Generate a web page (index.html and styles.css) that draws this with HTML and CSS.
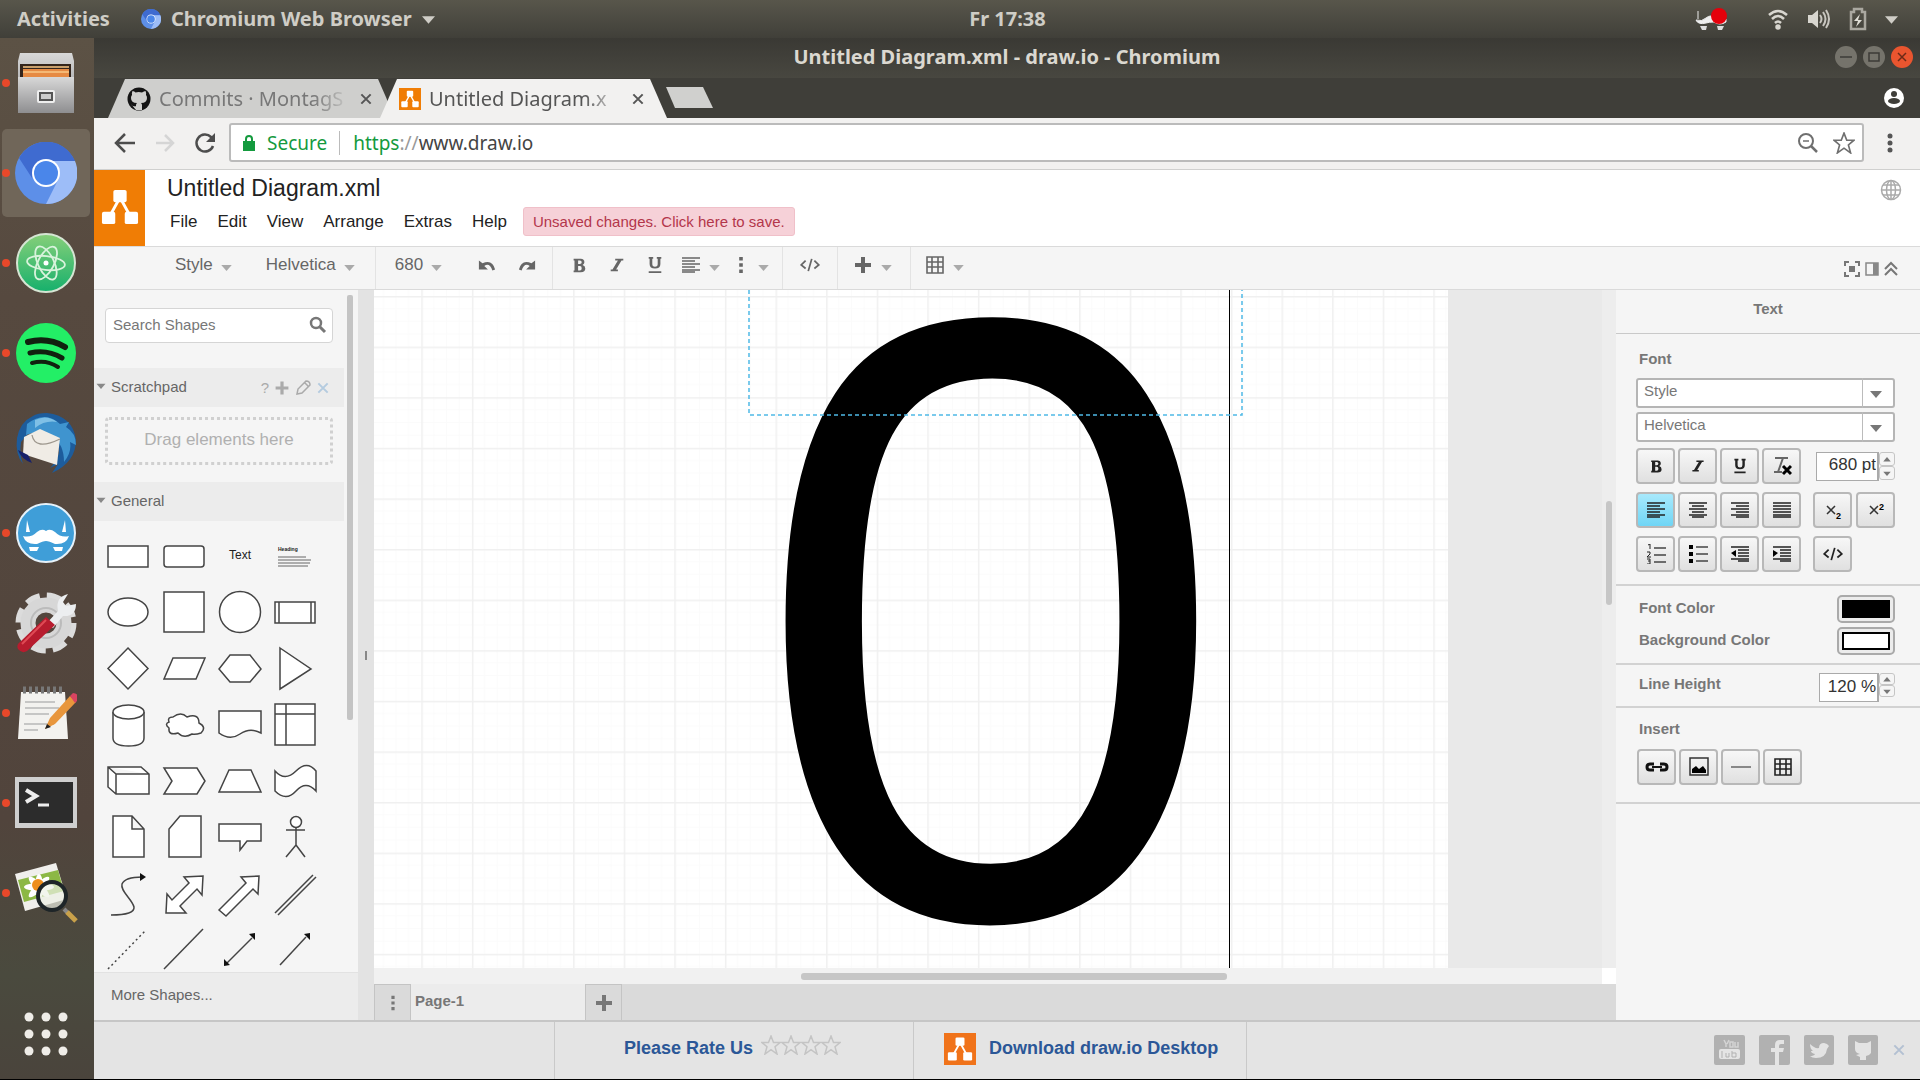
FILE: index.html
```html
<!DOCTYPE html>
<html lang="en">
<head>
<meta charset="utf-8">
<title>Untitled Diagram.xml - draw.io - Chromium</title>
<link rel="stylesheet" href="styles.css">
</head>
<body>
<svg class="defs" aria-hidden="true">
  <symbol id="caret" viewBox="0 0 12 8"><path d="M0 1h12L6 8z" fill="currentColor"/></symbol>
  <symbol id="drawio" viewBox="0 0 40 40"><path d="M20 10 9 30M20 10l11 20" stroke="#fff" stroke-width="3" fill="none"/><rect x="13" y="2" width="14" height="13" rx="2" fill="#fff"/><rect x="1" y="25" width="14" height="13" rx="2" fill="#fff"/><rect x="25" y="25" width="14" height="13" rx="2" fill="#fff"/></symbol>
  <symbol id="chromium" viewBox="0 0 62 62"><circle cx="31" cy="31" r="31" fill="#5d8fe8"/><path d="M4 16A31 31 0 0 1 60 19H31L17 36z" fill="#3f6bd0"/><path d="M60 19A31 31 0 0 1 31 62L43 38 38 19z" fill="#9dbdf8"/><circle cx="31" cy="31" r="14" fill="#fff"/><circle cx="31" cy="31" r="12" fill="#4a86ea"/></symbol>
  <symbol id="lines-left" viewBox="0 0 20 16"><path d="M1 1h18M1 4h13M1 7h18M1 10h13M1 13h18M1 15h13" stroke="currentColor" stroke-width="1.6"/></symbol>
  <symbol id="bold" viewBox="0 0 20 20"><path d="M4 3h8q4 0 4 4 0 2-2 3 3 1 3 4 0 4-5 4H4v-2h1V5H4zM9 5v4h2q2 0 2-2t-2-2zM9 11v5h2q2 0 2-2.500t-2-2.500z" fill="currentColor" fill-rule="evenodd"/></symbol>
  <symbol id="italic" viewBox="0 0 20 20"><path d="M8 3h9v2h-2L9 15h2v2H3v-2h2L11 5H8z" fill="currentColor"/></symbol>
  <symbol id="underline" viewBox="0 0 20 20"><path d="M3 1h5v2H7v6q0 3 3 3t3-3V3h-1V1h5v2h-1v6q0 5-6 5T4 9V3H3zM3 17h14v2H3z" fill="currentColor"/></symbol>
  <symbol id="code" viewBox="0 0 24 16"><path d="M7 3 2 8l5 4M17 3l5 5-5 4M14 1l-4 14" fill="none" stroke="currentColor" stroke-width="2"/></symbol>
  <symbol id="plus" viewBox="0 0 20 20"><path d="M8 2h4v6h6v4h-6v6H8v-6H2V8h6z" fill="currentColor"/></symbol>
  <symbol id="table" viewBox="0 0 20 20"><path d="M2 2h16v16H2zM2 7h16M2 12h16M7 2v16M13 2v16" fill="none" stroke="currentColor" stroke-width="1.600"/></symbol>
  <symbol id="dots" viewBox="0 0 20 20"><path d="M8 1h4v4H8zM8 8h4v4H8zM8 15h4v4H8z" fill="currentColor"/></symbol>
  <symbol id="star" viewBox="0 0 20 20"><path d="M10 1l2.500 6.500H19l-5 4.300 2 7.200-6-4.300L4 19l2-7.200-5-4.300h6.500z" fill="none" stroke="currentColor" stroke-width="1.500"/></symbol>
  <symbol id="cross" viewBox="0 0 12 12"><path d="M2 2l8 8M10 2l-8 8" stroke="currentColor" stroke-width="1.700"/></symbol>
  <symbol id="undo" viewBox="0 0 20 20"><path d="M1 5v10h10L7 11q6-4 9 5l3-1Q16 3 5 8z" fill="currentColor"/></symbol>
</svg>

<header class="topbar">
  <div class="top-left">
    <button class="sys">Activities</button>
    <button class="sys app"><svg width="20" height="22"><use href="#chromium"/></svg>Chromium Web Browser<svg width="13" height="9"><use href="#caret"/></svg></button>
  </div>
  <time class="clock">Fr 17:38</time>
  <div class="top-right">
    <svg class="tray-app" width="34" height="26" viewBox="0 0 34 26"><path d="M3 5v8M1 14q6 2 10-2 5-4 8 0 5 4 12 1v3q-6 4-12 0-5 0-8 1-8 2-10-3z" fill="#eee" stroke="#eee"/><path d="M5 20h7l-1 4H7zM22 20h7l-2 4h-4z" fill="#ddd"/><circle cx="24" cy="10" r="8" fill="#e5000b"/></svg>
    <svg width="22" height="22" viewBox="0 0 22 22" fill="none" stroke="#d8d6cf" stroke-width="2.500"><path d="M2 7q9-8 18 0M5 11q6-6 12 0M8 15q3-3 6 0"/><circle cx="11" cy="19" r="1.500" fill="#d8d6cf"/></svg>
    <svg width="24" height="22" viewBox="0 0 24 22"><path d="M1 7h4l6-5v18l-6-5H1z" fill="#d8d6cf"/><path d="M13 7q3 4 0 8M16 4q5 7 0 14M19 2q6 9 0 18" fill="none" stroke="#c8c6bf" stroke-width="2"/></svg>
    <svg width="18" height="24" viewBox="0 0 18 24"><path d="M2 5h3V2h8v3h3v17H2z" fill="none" stroke="#aaa8a0" stroke-width="2.500"/><path d="M11 7l-6 7h4l-2 6 6-7H9z" fill="#e0ded6"/></svg>
    <svg width="13" height="9"><use href="#caret"/></svg>
  </div>
</header>

<div class="desktop">
<nav class="dock" aria-label="Dock">
  <button class="dock-item run" aria-label="Files"><svg width="62" height="62" viewBox="0 0 62 62"><defs><linearGradient id="g1" x2="0" y2="1"><stop stop-color="#d8d8d8"/><stop offset="1" stop-color="#8e8e90"/></linearGradient></defs><path d="M5 1h52l2 8v52H3V9z" fill="url(#g1)"/><path d="M5 12h51v15H5z" fill="#33251c"/><path d="M8 17h46v9H8z" fill="#e68a43"/><path d="M8 15h46M8 20h46" stroke="#f9c887" stroke-width="1.500" fill="none"/><path d="M3 25h56v36H3z" fill="url(#g1)"/><rect x="22" y="38" width="18" height="13" rx="2" fill="#eee"/><rect x="25" y="41" width="12" height="7" fill="#ccc" stroke="#555" stroke-width="2"/></svg></button>
  <button class="dock-item run active" aria-label="Chromium"><svg width="62" height="62"><use href="#chromium"/></svg></button>
  <button class="dock-item run" aria-label="Atom"><svg width="62" height="62" viewBox="0 0 62 62"><defs><linearGradient id="g2" x2="0" y2="1"><stop stop-color="#86cf79"/><stop offset="1" stop-color="#16b06c"/></linearGradient></defs><circle cx="31" cy="31" r="29" fill="url(#g2)" stroke="#d5e5d3" stroke-width="2"/><g fill="none" stroke="#d8f3dc" stroke-width="1.800"><ellipse cx="31" cy="31" rx="19" ry="7" transform="rotate(6 31 31)"/><ellipse cx="31" cy="31" rx="18" ry="8" transform="rotate(64 31 31)"/><ellipse cx="31" cy="31" rx="18" ry="8" transform="rotate(118 31 31)"/></g><circle cx="31" cy="31" r="2.500" fill="#fff"/></svg></button>
  <button class="dock-item run" aria-label="Spotify"><svg width="62" height="62" viewBox="0 0 62 62"><circle cx="31" cy="31" r="30" fill="#23ef66"/><g fill="none" stroke="#11210f" stroke-linecap="round"><path d="M13 20q20-5 37 5" stroke-width="6"/><path d="M15 31q17-4 32 5" stroke-width="5"/><path d="M17 41q14-4 26 4" stroke-width="4"/></g></svg></button>
  <button class="dock-item" aria-label="Thunderbird"><svg width="62" height="62" viewBox="0 0 62 62"><path d="M2 26Q5 10 18 4q4-3 14-3 26 3 29 27 0 22-24 33l6-9-8 4q12-12 8-24L16 18 6 30q-2 12 2 22-8-10-6-26z" fill="#1d5c9c"/><path d="M12 12Q30-2 45 12l9-2-3 5q10 6 10 18l-6-3q2 10-6 20 0-18-12-26-12-7-26-1z" fill="#3f94cf"/><path d="M20 8q12-6 22 2-12-2-22 6z" fill="#7fc0e6"/><path d="M9 25l16-8 20 9-3 27L8 42z" fill="#f0ece5"/><path d="M17 23q3 16 28 4" fill="none" stroke="#9d978d" stroke-width="1.300"/><path d="M3 38q3 9 14 13l-4-8z" fill="#16206b"/></svg></button>
  <button class="dock-item run" aria-label="Mail helper"><svg width="62" height="62" viewBox="0 0 62 62"><circle cx="31" cy="31" r="29" fill="#3f9ed8" stroke="#e6f2fa" stroke-width="2"/><path d="M12 18l3 12h-4zM50 18l-3 12h4zM8 34q8 2 14-4 5-4 9-1 4-3 9 1 6 6 14 4-3 9-14 8-6-3-9-3t-9 3q-11 1-14-8z" fill="#fff"/><path d="M14 45h10l-2 4h-7zM38 45h10l-1 4h-7z" fill="#fff"/></svg></button>
  <button class="dock-item" aria-label="Settings"><svg width="62" height="62" viewBox="0 0 62 62"><circle cx="31" cy="31" r="26" fill="none" stroke="#dcdcdc" stroke-width="9" stroke-dasharray="13.600 6.820"/><circle cx="31" cy="31" r="18" fill="none" stroke="#d7d7d7" stroke-width="15"/><circle cx="31" cy="31" r="15" fill="none" stroke="#bbb" stroke-width="2"/><path d="M31 32 43 19q-3-14 10-17l-5 8 3 4 10-2q0 13-13 12L38 36z" fill="#eceef0"/><path d="M31 25l9 8L12 59q-5 3-9-2-2-4 2-7z" fill="#b71c2e"/><path d="M31 28 7 52" stroke="#e04a55" stroke-width="2"/></svg></button>
  <button class="dock-item run" aria-label="Text editor"><svg width="62" height="62" viewBox="0 0 62 62"><path d="M6 10h44l3 47H3z" fill="#f3f2ef"/><path d="M8 8h42" stroke="#777" stroke-width="7" stroke-dasharray="3 3"/><path d="M10 20h30M10 26h34M10 32h24M9 42h30M9 48h14" stroke="#b8b8b8" stroke-width="1.500"/><path d="M30 47l5-11 20-22 6 6-21 22z" fill="#e8963c"/><path d="M55 14l3-3q7 1 5 7l-3 3z" fill="#d84461"/><path d="M30 47l2-5 4 3z" fill="#222"/></svg></button>
  <button class="dock-item run" aria-label="Terminal"><svg width="64" height="54" viewBox="0 0 64 54"><rect x="1" y="1" width="62" height="51" fill="#cfcfcf"/><rect x="5" y="6" width="54" height="41" fill="#2c2c2c"/><path d="M12 14l10 6-10 6" fill="none" stroke="#eee" stroke-width="4"/><path d="M24 29h11" stroke="#eee" stroke-width="3"/></svg></button>
  <button class="dock-item run" aria-label="Image viewer"><svg width="64" height="62" viewBox="0 0 64 62"><path d="M1 12 42 1l11 36-42 12z" fill="#f0efec"/><path d="M4 18 44 8l6 21-40 11z" fill="#8cb845"/><g fill="#fff"><ellipse cx="25" cy="25" rx="15" ry="4"/><ellipse cx="25" cy="25" rx="4" ry="13"/><ellipse cx="25" cy="25" rx="14" ry="4" transform="rotate(45 25 25)"/><ellipse cx="25" cy="25" rx="14" ry="4" transform="rotate(-45 25 25)"/></g><circle cx="24" cy="23" r="6" fill="#ee8e1d"/><circle cx="38" cy="34" r="14" fill="#edf1e5" fill-opacity=".7" stroke="#1e2528" stroke-width="4"/><path d="M50 47l4 4" stroke="#888" stroke-width="4"/><path d="M53 50l9 9" stroke="#c9a14a" stroke-width="5"/></svg></button>
  <button class="dock-item apps" aria-label="Show applications"><svg width="46" height="46" viewBox="0 0 46 46" fill="#efede8"><circle cx="6" cy="6" r="4.500"/><circle cx="23" cy="6" r="4.500"/><circle cx="40" cy="6" r="4.500"/><circle cx="6" cy="23" r="4.500"/><circle cx="23" cy="23" r="4.500"/><circle cx="40" cy="23" r="4.500"/><circle cx="6" cy="40" r="4.500"/><circle cx="23" cy="40" r="4.500"/><circle cx="40" cy="40" r="4.500"/></svg></button>
</nav>

<main class="window">
  <div class="titlebar">
    <h1>Untitled Diagram.xml - draw.io - Chromium</h1>
    <div class="win-buttons">
      <button aria-label="Minimize"><svg width="24" height="24" viewBox="0 0 24 24"><circle cx="12" cy="12" r="11" fill="#75736b"/><path d="M6 12h12" stroke="#3c3b37" stroke-width="1.500"/></svg></button>
      <button aria-label="Maximize"><svg width="24" height="24" viewBox="0 0 24 24"><circle cx="12" cy="12" r="11" fill="#75736b"/><rect x="7" y="8" width="10" height="8" fill="none" stroke="#3c3b37" stroke-width="1.500"/></svg></button>
      <button aria-label="Close"><svg width="24" height="24" viewBox="0 0 24 24"><circle cx="12" cy="12" r="11" fill="#e9552f"/><path d="M8 8l8 8M16 8l-8 8" stroke="#6b2a17" stroke-width="1.500"/></svg></button>
    </div>
  </div>
  <div class="tabstrip">
    <div class="tab"><svg width="24" height="24" viewBox="0 0 24 24"><circle cx="12" cy="12" r="11.500" fill="#151515"/><path d="M9 23v-4q-4 1-5-2M9 23v-5q0-1 1-2-6 0-6-5 0-2 1-3-.5-2 .5-4 2 0 3 1.500 3-1 6.500 0Q17 4 18.500 4q1 2 .5 4 1 1 1 3 0 5-6 5 1 1 1 2v5z" fill="#cfcfcd"/></svg><span>Commits · MontagS</span><button aria-label="Close tab"><svg width="14" height="14"><use href="#cross"/></svg></button></div>
    <div class="tab current"><svg class="fav" width="22" height="22" viewBox="-4 -4 48 48"><use href="#drawio" width="40" height="40"/></svg><span>Untitled Diagram.x</span><button aria-label="Close tab"><svg width="14" height="14"><use href="#cross"/></svg></button></div>
    <button class="newtab" aria-label="New tab"></button>
    <button class="profile" aria-label="Profile"><svg width="20" height="20" viewBox="0 0 20 20"><circle cx="10" cy="10" r="10" fill="#fff"/><circle cx="10" cy="6" r="3" fill="#3f3e39"/><ellipse cx="10" cy="13" rx="6" ry="3" fill="#3f3e39"/></svg></button>
  </div>
  <div class="navbar">
    <button aria-label="Back"><svg width="24" height="24" viewBox="0 0 24 24"><path d="M22 12H4M12 3l-9 9 9 9" fill="none" stroke="#4d4d4d" stroke-width="2.500"/></svg></button>
    <button aria-label="Forward"><svg width="24" height="24" viewBox="0 0 24 24"><path d="M3 12h17M12 4l8 8-8 8" fill="none" stroke="#d5d5d5" stroke-width="2.500"/></svg></button>
    <button aria-label="Reload"><svg width="24" height="24" viewBox="0 0 24 24"><path d="M20 15a8.500 8.500 0 1 1-2-9l3 3" fill="none" stroke="#4d4d4d" stroke-width="2.500"/><path d="M22 2v9h-9z" fill="#4d4d4d"/></svg></button>
    <div class="omnibox">
      <svg width="14" height="18" viewBox="0 0 14 18"><path d="M1 7h12v10H1z" fill="#149a3e"/><path d="M4 8V5q0-3 3-3t3 3v3" fill="none" stroke="#149a3e" stroke-width="2"/></svg>
      <span class="secure">Secure</span>
      <div class="url" role="textbox" aria-label="Address"><span class="scheme">https</span><span class="slashes">://</span>www.draw.io</div>
      <button aria-label="Zoom"><svg width="22" height="22" viewBox="0 0 22 22" fill="none" stroke="#6f6f6f"><circle cx="9" cy="9" r="7" stroke-width="2"/><path d="M14 14l6 6" stroke-width="2.500"/><path d="M6 9h6" stroke-width="1.500"/></svg></button>
      <button aria-label="Bookmark"><svg class="ink" width="22" height="22"><use href="#star"/></svg></button>
    </div>
    <button class="more" aria-label="Browser menu"><svg width="8" height="22" viewBox="0 0 8 22" fill="#555"><circle cx="4" cy="4" r="2.500"/><circle cx="4" cy="11" r="2.500"/><circle cx="4" cy="18" r="2.500"/></svg></button>
  </div>

  <div class="app-head">
    <div class="logo"><svg width="38" height="38"><use href="#drawio"/></svg></div>
    <div class="head-text">
      <div class="doc-title">Untitled Diagram.xml</div>
      <div class="menu"><button>File</button><button>Edit</button><button>View</button><button>Arrange</button><button>Extras</button><button>Help</button><button class="unsaved">Unsaved changes. Click here to save.</button></div>
    </div>
    <button class="globe" aria-label="Language"><svg width="22" height="22" viewBox="0 0 22 22" fill="none" stroke="#aaa" stroke-width="1.500"><circle cx="11" cy="11" r="9.500"/><ellipse cx="11" cy="11" rx="4.500" ry="9.500"/><path d="M2 11h18M3 6h16M3 16h16M11 1v20"/></svg></button>
  </div>

  <div class="toolbar">
    <div class="group g-font"><button class="drop">Style<svg width="11" height="7"><use href="#caret"/></svg></button><button class="drop">Helvetica<svg width="11" height="7"><use href="#caret"/></svg></button></div>
    <div class="group g-size"><button class="drop">680<svg width="11" height="7"><use href="#caret"/></svg></button><button aria-label="Undo"><svg width="20" height="18"><use href="#undo"/></svg></button><button aria-label="Redo"><svg class="flip" width="20" height="18"><use href="#undo"/></svg></button></div>
    <div class="group g-format"><button aria-label="Bold"><svg width="18" height="18"><use href="#bold"/></svg></button><button aria-label="Italic"><svg width="18" height="18"><use href="#italic"/></svg></button><button aria-label="Underline"><svg width="18" height="18"><use href="#underline"/></svg></button><button class="drop" aria-label="Align"><svg width="20" height="16"><use href="#lines-left"/></svg><svg width="11" height="7"><use href="#caret"/></svg></button><button class="drop" aria-label="More formats"><svg width="18" height="18"><use href="#dots"/></svg><svg width="11" height="7"><use href="#caret"/></svg></button></div>
    <div class="group g-code"><button aria-label="HTML"><svg width="24" height="14"><use href="#code"/></svg></button></div>
    <div class="group g-plus"><button class="drop" aria-label="Insert"><svg width="20" height="20"><use href="#plus"/></svg><svg width="11" height="7"><use href="#caret"/></svg></button></div>
    <div class="group g-table"><button class="drop" aria-label="Table"><svg width="20" height="20"><use href="#table"/></svg><svg width="11" height="7"><use href="#caret"/></svg></button></div>
    <div class="view-tools">
      <button aria-label="Fullscreen"><svg width="16" height="16" viewBox="0 0 16 16" fill="none" stroke="#777" stroke-width="2"><path d="M1 5V1h4M11 1h4v4M15 11v4h-4M5 15H1v-4"/><rect x="6" y="6" width="4" height="4" fill="#777"/></svg></button>
      <button aria-label="Format panel"><svg width="14" height="14" viewBox="0 0 14 14"><path d="M1 1h12v12H1z" fill="none" stroke="#888" stroke-width="1.500"/><path d="M8 1h5v12H8z" fill="#888"/></svg></button>
      <button aria-label="Collapse"><svg width="14" height="16" viewBox="0 0 14 16" fill="none" stroke="#777" stroke-width="2"><path d="M1 8l6-6 6 6M1 14l6-6 6 6"/></svg></button>
    </div>
  </div>

  <div class="work">
    <aside class="shapes">
      <div class="scroller">
        <div class="scroll-content">
          <label class="search"><input type="text" placeholder="Search Shapes" aria-label="Search Shapes"><svg width="18" height="18" viewBox="0 0 18 18" fill="none" stroke="#777"><circle cx="7" cy="7" r="5" stroke-width="2.500"/><path d="M11 11l5 5" stroke-width="3"/></svg></label>
          <div class="section-head"><svg width="10" height="6"><use href="#caret"/></svg><h2>Scratchpad</h2><div class="pad-tools"><button>?</button><button aria-label="Add"><svg width="16" height="16"><use href="#plus"/></svg></button><button aria-label="Edit"><svg width="16" height="16" viewBox="0 0 16 16" fill="none" stroke="#aaa" stroke-width="1.500"><path d="M2 14l1-5 8-8q4 0 4 4l-8 8zM10 3l3 3"/></svg></button><button class="blue" aria-label="Close scratchpad"><svg width="14" height="14"><use href="#cross"/></svg></button></div></div>
          <div class="dropzone">Drag elements here</div>
          <div class="section-head"><svg width="10" height="6"><use href="#caret"/></svg><h2>General</h2></div>
          <div class="palette">
            <svg viewBox="0 0 56 56"><rect x="8" y="18" width="40" height="21"/></svg>
            <svg viewBox="0 0 56 56"><rect x="8" y="18" width="40" height="21" rx="3"/></svg>
            <svg viewBox="0 0 56 56"><text x="28" y="31" text-anchor="middle" class="t12">Text</text></svg>
            <svg viewBox="0 0 56 56"><text x="10" y="23" class="t5">Heading</text><path d="M10 29h28M10 32h33M10 35h32M10 38h30" stroke="#666" stroke-width="1"/></svg>

            <svg viewBox="0 0 56 56"><ellipse cx="28" cy="28" rx="20" ry="14"/></svg>
            <svg viewBox="0 0 56 56"><rect x="8" y="8" width="40" height="40"/></svg>
            <svg viewBox="0 0 56 56"><circle cx="28" cy="28" r="20.500"/></svg>
            <svg viewBox="0 0 56 56"><path d="M7 18h40v21H7zM11 18v21M43 18v21"/></svg>

            <svg viewBox="0 0 56 56"><path d="M28 8l20 20.500L28 49 8 28.500z"/></svg>
            <svg viewBox="0 0 56 56"><path d="M17 18h32l-9 21H8z"/></svg>
            <svg viewBox="0 0 56 56"><path d="M18 15h20l11 14-11 13H18L7 29z"/></svg>
            <svg viewBox="0 0 56 56"><path d="M12 8l31 21-31 20z"/></svg>

            <svg viewBox="0 0 56 56"><path d="M13 16v26q0 8 15.500 8T44 42V16"/><ellipse cx="28.500" cy="16" rx="15.500" ry="7"/></svg>
            <svg viewBox="0 0 56 56"><path d="M17 21q8-6 14 0 12-4 12 6 8 4 2 10-6 2-9 1-8 5-14-1-10 3-9-5-5-4 0-6-2-5 4-5z"/></svg>
            <svg viewBox="0 0 56 56"><path d="M7 15h42v22q-11-6-21 1T7 37z"/></svg>
            <svg viewBox="0 0 56 56"><path d="M7 8h40v41H7zM18 8v41M7 18h40"/></svg>

            <svg viewBox="0 0 56 56"><path d="M8 15h33l8 7v20H16l-8-7zM8 15l8 7h33M16 22v20"/></svg>
            <svg viewBox="0 0 56 56"><path d="M8 16h33l8 13-8 13H8l8-13z"/></svg>
            <svg viewBox="0 0 56 56"><path d="M17 18h22l10 22H7z"/></svg>
            <svg viewBox="0 0 56 56"><path d="M7 19q10 11 21 0t20 0v20q-10-11-20 0t-21 0z"/></svg>

            <svg viewBox="0 0 56 56"><path d="M13 8h19l12 13v28H13zM32 8v13h12"/></svg>
            <svg viewBox="0 0 56 56"><path d="M24 8h21v41H13V21z"/></svg>
            <svg viewBox="0 0 56 56"><path d="M7 16h42v17H35l-7 9v-9H7z"/></svg>
            <svg viewBox="0 0 56 56"><circle cx="28" cy="14" r="5.500"/><path d="M28 20v17M18 22h19M28 37L18 49M28 37l9 12" /></svg>

            <svg viewBox="0 0 56 56"><path d="M11 51q24 0 23-8c-2-8-14-16-12-23q3-7 20-7" fill="none"/><path d="M40 9l6 4-6 4z" class="fill"/></svg>
            <svg viewBox="0 0 56 56"><path d="M10 49l1-19 5 6 17-17-5-6 19-1-1 19-5-6-17 17 6 7z"/></svg>
            <svg viewBox="0 0 56 56"><path d="M7 46l27-27-5-6 18-1-1 18-5-5-27 27z"/></svg>
            <svg viewBox="0 0 56 56"><path d="M7 49l38-38M10 51l38-38"/></svg>

            <svg viewBox="0 0 56 56"><path d="M8 49l38-39" stroke-dasharray="2 3"/></svg>
            <svg viewBox="0 0 56 56"><path d="M8 49l39-40"/></svg>
            <svg viewBox="0 0 56 56"><path d="M15 43l25-25"/><path d="M12 46v-7l6 6zM43 13v7l-6-6z" class="fill"/></svg>
            <svg viewBox="0 0 56 56"><path d="M12 45l26-28"/><path d="M42 13v7l-6-6z" class="fill"/></svg>
          </div>
        </div>
        <div class="track"><div class="thumb"></div></div>
      </div>
      <button class="more-shapes">More Shapes...</button>
    </aside>
    <div class="splitter"></div>
    <section class="center">
      <div class="canvas-row">
        <div class="canvas">
          <div class="sheet">
            <svg width="100%" height="100%"><defs><pattern id="grid" x="47.300" y="6" width="50.600" height="50.600" patternUnits="userSpaceOnUse"><path d="M12.650 0v50.600M25.300 0v50.600M37.950 0v50.600M0 12.650h50.600M0 25.300h50.600M0 37.950h50.600" stroke="#fbfbfb" stroke-width="1" fill="none"/><path d="M0 0h50.600M0 0v50.600" stroke="#f0f0f0" stroke-width="3" fill="none"/></pattern></defs><rect width="100%" height="100%" fill="url(#grid)"/></svg>
          </div>
          <div class="page-edge"></div>
          <div class="glyph">0</div>
          <svg class="outline" width="496" height="127" viewBox="0 0 496 127"><path d="M1 0v125h493V0" fill="none" stroke="#4fb9e6" stroke-width="1.500" stroke-dasharray="4 3"/></svg>
        </div>
        <div class="vtrack"><div class="vthumb"></div></div>
      </div>
      <div class="htrack"><div class="hthumb"></div></div>
      <div class="pages"><button class="page-btn" aria-label="Pages"><svg width="16" height="18"><use href="#dots"/></svg></button><button class="page-name">Page-1</button><button class="page-btn" aria-label="Insert page"><svg width="20" height="20"><use href="#plus"/></svg></button></div>
    </section>

    <aside class="format">
      <h2 class="format-title">Text</h2>
      <div class="block font-block">
        <h3>Font</h3>
        <div class="pick"><select aria-label="Style"><option>Style</option></select><svg width="12" height="10"><use href="#caret"/></svg></div>
        <div class="pick"><select aria-label="Font family"><option>Helvetica</option></select><svg width="12" height="10"><use href="#caret"/></svg></div>
        <div class="btn-row">
          <button class="tb" aria-label="Bold"><svg width="16" height="16"><use href="#bold"/></svg></button><button class="tb" aria-label="Italic"><svg width="16" height="16"><use href="#italic"/></svg></button><button class="tb" aria-label="Underline"><svg width="16" height="16"><use href="#underline"/></svg></button><button class="tb" aria-label="Clear formatting"><svg width="20" height="20" viewBox="0 0 20 20"><path d="M3 2h13M11 2L6 16M2 16h8" stroke="#666" stroke-width="2"/><path d="M11 10l8 8M19 10l-8 8" stroke="#000" stroke-width="3"/></svg></button>
          <span class="spin"><input type="text" value="680 pt" aria-label="Font size"><span class="steps"><button aria-label="Increase size"><svg class="up" width="8" height="5"><use href="#caret"/></svg></button><button aria-label="Decrease size"><svg width="8" height="5"><use href="#caret"/></svg></button></span></span>
        </div>
        <div class="btn-row">
          <button class="tb on" aria-label="Left"><svg width="20" height="16"><use href="#lines-left"/></svg></button><button class="tb" aria-label="Center"><svg width="20" height="16" viewBox="0 0 20 16"><path d="M1 1h18M4 4h12M1 7h18M4 10h12M1 13h18M4 15h12" stroke="#222" stroke-width="1.500"/></svg></button><button class="tb" aria-label="Right"><svg width="20" height="16" viewBox="0 0 20 16"><path d="M1 1h18M6 4h13M1 7h18M6 10h13M1 13h18M6 15h13" stroke="#222" stroke-width="1.500"/></svg></button><button class="tb" aria-label="Justify"><svg width="20" height="16" viewBox="0 0 20 16"><path d="M1 1h18M1 4h18M1 7h18M1 10h18M1 13h18M1 15h18" stroke="#222" stroke-width="1.500"/></svg></button>
          <span class="pair"><button class="tb" aria-label="Subscript"><svg width="20" height="20" viewBox="0 0 20 20"><path d="M4 6l8 8M12 6l-8 8" stroke="#333" stroke-width="1.500"/><text x="13" y="19" class="t9">2</text></svg></button><button class="tb" aria-label="Superscript"><svg width="20" height="20" viewBox="0 0 20 20"><path d="M4 6l8 8M12 6l-8 8" stroke="#333" stroke-width="1.500"/><text x="13" y="10" class="t9">2</text></svg></button></span>
        </div>
        <div class="btn-row">
          <button class="tb" aria-label="Numbered list"><svg width="20" height="20" viewBox="0 0 20 20"><path d="M8 4h12M8 11h12M8 18h12" stroke="#444" stroke-width="1.500"/><path d="M2 1l2-1v5M1 8h3v2L1 13h4M1 15h3v5H1M2 17h2" stroke="#222" fill="none"/></svg></button><button class="tb" aria-label="Bulleted list"><svg width="20" height="20" viewBox="0 0 20 20"><path d="M8 3h12M8 10h12M8 17h12" stroke="#444" stroke-width="1.500"/><path d="M1 1h4v4H1zM1 8h4v4H1zM1 15h4v4H1z"/></svg></button><button class="tb" aria-label="Outdent"><svg width="20" height="16" viewBox="0 0 20 16"><path d="M1 1h18M8 4h11M8 7h11M8 10h11M1 13h18M8 15h11" stroke="#222" stroke-width="1.500"/><path d="M6 4v7L1 7z"/></svg></button><button class="tb" aria-label="Indent"><svg width="20" height="16" viewBox="0 0 20 16"><path d="M1 1h18M8 4h11M8 7h11M8 10h11M1 13h18M8 15h11" stroke="#222" stroke-width="1.500"/><path d="M1 4v7l5-4z"/></svg></button>
          <span class="pair"><button class="tb" aria-label="HTML"><svg width="24" height="14"><use href="#code"/></svg></button></span>
        </div>
      </div>
      <div class="block colors">
        <div class="line"><h3>Font Color</h3><button class="swatch black" aria-label="Font Color"><i></i></button></div>
        <div class="line"><h3>Background Color</h3><button class="swatch" aria-label="Background Color"><i></i></button></div>
      </div>
      <div class="block height-block">
        <div class="line"><label for="lh">Line Height</label><span class="spin short"><input id="lh" type="text" value="120 %"><span class="steps"><button aria-label="Increase line height"><svg class="up" width="8" height="5"><use href="#caret"/></svg></button><button aria-label="Decrease line height"><svg width="8" height="5"><use href="#caret"/></svg></button></span></span></div>
      </div>
      <div class="block insert-block">
        <h3>Insert</h3>
        <div class="btn-row">
          <button class="tb" aria-label="Link"><svg width="24" height="14" viewBox="0 0 24 14" fill="none" stroke="#111" stroke-width="3"><path d="M9 4H5q-3 0-3 3t3 3h4M15 4h4q3 0 3 3t-3 3h-4"/><path d="M7 7h10" stroke-width="2"/></svg></button><button class="tb" aria-label="Image"><svg width="20" height="20" viewBox="0 0 20 20"><path d="M1 1h18v17H1z" fill="none" stroke="#333" stroke-width="1.500"/><path d="M3 16v-4l4-3 3 3 4-3 3 4v3z"/></svg></button><button class="tb" aria-label="Rule"><svg width="20" height="4"><path d="M0 2h20" stroke="#888" stroke-width="2"/></svg></button><button class="tb" aria-label="Table"><svg width="20" height="20"><use href="#table"/></svg></button>
        </div>
      </div>
    </aside>
  </div>

  <footer class="footer">
    <div class="foot-cell blank"></div>
    <div class="foot-cell rate"><a href="#rate">Please Rate Us</a><span class="stars"><svg width="20" height="20"><use href="#star"/></svg><svg width="20" height="20"><use href="#star"/></svg><svg width="20" height="20"><use href="#star"/></svg><svg width="20" height="20"><use href="#star"/></svg></span></div>
    <div class="foot-cell desktop-app"><svg class="badge" width="32" height="32" viewBox="-5 -5 50 50"><use href="#drawio" width="40" height="40"/></svg><a href="#desktop">Download draw.io Desktop</a></div>
    <div class="social">
      <a href="#youtube" aria-label="YouTube"><svg width="31" height="30" viewBox="0 0 31 30"><rect width="31" height="30" rx="2" fill="#b1b1b1"/><path d="M10 5l2 4v3M15 5l-2 4M16 7h3v5h-3zM21 7v5h3V7" stroke="#d4d4d4" stroke-width="1.500" fill="none"/><rect x="5" y="14" width="21" height="10" rx="2" fill="#e4e4e4"/><path d="M8 16v7M12 18v4h3v-4M18 16v6h4v-4h-4" stroke="#b1b1b1" fill="none"/></svg></a>
      <a href="#facebook" aria-label="Facebook"><svg width="31" height="30" viewBox="0 0 31 30"><rect width="31" height="30" rx="2" fill="#b1b1b1"/><path d="M16 30V17h-4v-4h4v-3q0-5 5-5h4v4h-3q-2 0-2 2v2h5l-1 4h-4v13z" fill="#e4e4e4"/></svg></a>
      <a href="#twitter" aria-label="Twitter"><svg width="30" height="30" viewBox="0 0 30 30"><rect width="30" height="30" rx="2" fill="#b1b1b1"/><path d="M6 9q5 5 9 4 0-5 5-5l3 1 2 2-2 3q-1 9-11 9-4 0-6-2 4 0 5-2-4-1-4-3h2q-3-2-3-7z" fill="#e4e4e4"/></svg></a>
      <a href="#github" aria-label="GitHub"><svg width="30" height="30" viewBox="0 0 30 30"><rect width="30" height="30" rx="2" fill="#b1b1b1"/><path d="M7 6l4 2h8l4-2v12q-2 3-5 3v4h-6v-3l-4-2 4-1q-5-1-5-5z" fill="#e4e4e4"/></svg></a>
      <button class="foot-close" aria-label="Close"><svg width="14" height="14"><use href="#cross"/></svg></button>
    </div>
  </footer>
</main>
</div>
</body>
</html>
```
FILE: styles.css
```css
* { box-sizing: border-box; }
html, body { height: 100%; margin: 0; }
body {
  display: flex;
  flex-direction: column;
  overflow: hidden;
  background: #3f3e39;
  border-bottom: 1px solid #000;
  color: #777;
  font-family: "Liberation Sans", Arial, sans-serif;
  font-size: 15px;
}
button, input, select { font: inherit; color: inherit; }
button { padding: 0; border: 0; background: none; display: flex; align-items: center; justify-content: center; }
a { color: inherit; text-decoration: none; display: flex; }
h1, h2, h3 { margin: 0; font-size: inherit; }
svg { display: block; flex: none; }
.defs { position: absolute; width: 0; height: 0; }
.flip { transform: scaleX(-1); }
.up { transform: scaleY(-1); }

/* system bar */
.topbar {
  display: grid;
  grid-template-columns: 1fr auto 1fr;
  align-items: center;
  height: 38px;
  flex: none;
  background: linear-gradient(#58564b, #45443d 80%, #403f39);
  color: #cfcdc6;
  font: 700 20px/26px "Noto Sans", sans-serif;
}
.top-left { display: flex; gap: 31px; padding-left: 17px; }
.app { gap: 10px; }
.clock { margin-left: 95px; }
.top-right { display: flex; align-items: center; justify-content: flex-end; gap: 18px; padding-right: 22px; }
.tray-app { margin-right: 20px; }

.desktop { display: flex; flex: 1; min-height: 0; }

/* dock */
.dock {
  display: flex;
  flex-direction: column;
  flex: none;
  width: 94px;
  background: linear-gradient(#5c5245, #56493f 25%, #51443c 75%, #4a4a3e 90%, #4a443c);
}
.dock-item { position: relative; height: 88px; margin: 1px 4px 1px 2px; border-radius: 5px; flex: none; }
.dock-item.active { background: #706659; }
.dock-item.run::before {
  content: "";
  position: absolute;
  left: 0;
  top: 40px;
  width: 8px;
  height: 8px;
  border-radius: 50%;
  background: #e8482a;
}
.dock-item.apps { margin-top: auto; }

/* browser window */
.window { display: flex; flex-direction: column; flex: 1; min-width: 0; }
.titlebar {
  display: grid;
  grid-template-columns: 1fr auto 1fr;
  align-items: center;
  height: 40px;
  flex: none;
  padding-bottom: 2px;
  background: linear-gradient(#3a3934, #484740);
  color: #dbd8d0;
  font: 700 20px/26px "Noto Sans", sans-serif;
}
.titlebar h1 { grid-column: 2; }
.win-buttons { display: flex; gap: 4px; justify-content: flex-end; padding-right: 6px; }
.tabstrip {
  display: flex;
  align-items: flex-end;
  height: 40px;
  flex: none;
  padding-left: 14px;
  background: #3f3e39;
  font: 20px "Noto Sans", sans-serif;
}
.tab {
  display: flex;
  align-items: center;
  gap: 8px;
  width: 287px;
  height: 39px;
  margin-right: -15px;
  padding: 0 22px 0 19px;
  background: #cfcfcd;
  color: #777;
  clip-path: polygon(17px 0, 270px 0, 287px 100%, 0 100%);
}
.tab.current { background: #f2f1f0; color: #555; position: relative; }
.tab span {
  flex: 1;
  white-space: nowrap;
  mask-image: linear-gradient(to right, #000 80%, transparent);
}
.tab button { color: #555; }
.fav { background: #f07d05; }
.newtab {
  width: 47px;
  height: 21px;
  margin: 0 0 10px 14px;
  background: #d0d0ce;
  clip-path: polygon(0 0, 37px 0, 100% 100%, 9px 100%);
}
.profile { margin: 0 16px 10px auto; }
.navbar {
  display: flex;
  align-items: center;
  height: 52px;
  flex: none;
  gap: 16px;
  padding: 0 26px 2px 19px;
  background: #f2f1f0;
  border-bottom: 1px solid #d0d0cf;
}
.omnibox {
  display: flex;
  align-items: center;
  flex: 1;
  height: 39px;
  margin-left: -4px;
  padding: 0 7px 0 11px;
  background: #fff;
  border: 2px solid #bbb;
  border-radius: 3px;
  font: 19px "Noto Sans", sans-serif;
}
.secure { margin-left: 11px; padding-right: 12px; border-right: 1px solid #bbb; line-height: 24px; color: #149a3e; }
.url { flex: 1; padding-left: 13px; color: #444; }
.scheme { color: #149a3e; }
.slashes { color: #999; }
.omnibox button { margin-left: 14px; }
.ink { color: #6f6f6f; }
.more { margin-left: 6px; }

/* editor header */
.app-head { display: flex; height: 76px; flex: none; background: #fff; color: #222; }
.logo { display: flex; align-items: center; justify-content: center; width: 51px; padding-bottom: 3px; background: #f07d05; }
.head-text { flex: 1; padding: 4px 0 0 22px; }
.doc-title { font-size: 23px; line-height: 28px; }
.menu { display: flex; align-items: center; gap: 20px; margin-top: 5px; padding-left: 3px; font-size: 17px; }
.unsaved {
  height: 29px;
  margin-left: -4px;
  padding: 0 9px;
  background: #f6d1d8;
  border: 1px solid #f0c0c9;
  border-radius: 3px;
  color: #b3364b;
  font-size: 15px;
}
.globe { align-self: flex-start; margin: 9px 18px 0 0; }

.toolbar {
  display: flex;
  height: 44px;
  flex: none;
  background: #f5f5f5;
  border: 1px solid #dadada;
  border-width: 1px 0;
  color: #666;
  font-size: 17px;
}
.group { display: flex; align-items: center; padding-bottom: 6px; border-right: 1px solid #e3e3e3; }
.drop { gap: 8px; }
.drop svg:last-child { color: #aaa; margin-top: 4px; }
.g-font { gap: 34px; padding-left: 81px; padding-right: 20px; }
.g-size { gap: 20px; padding-left: 19px; padding-right: 15px; }
.g-size .drop { margin-right: 15px; }
.g-format { gap: 20px; padding-left: 17px; padding-right: 18px; }
.g-format .drop { gap: 8px; margin: 0 -5px 0 -3px; }
.g-code { padding-left: 15px; padding-right: 15px; }
.g-plus { padding-left: 15px; padding-right: 18px; }
.g-table { padding-left: 14px; border: 0; }
.view-tools { display: flex; gap: 5px; align-items: center; margin-left: auto; padding: 1px 22px 0 0; }

/* editor body */
.work { display: flex; flex: 1; min-height: 0; }
.shapes { display: flex; flex-direction: column; width: 264px; flex: none; background: #f5f5f5; }
.scroller { display: flex; flex: 1; min-height: 0; overflow: hidden; }
.scroll-content { width: 250px; flex: none; }
.search {
  display: flex;
  align-items: center;
  height: 35px;
  margin: 18px 11px 25px;
  padding: 0 5px 2px 7px;
  background: #fff;
  border: 1px solid #d5d5d5;
  border-radius: 4px;
}
.search input { flex: 1; min-width: 0; padding: 0; border: 0; outline: 0; background: none; }
.search input::placeholder { color: #777; opacity: 1; }
.section-head { display: flex; align-items: center; gap: 5px; height: 39px; padding: 0 14px 3px 2px; background: #ececec; }
.section-head > svg { color: #888; }
.section-head h2 { font-weight: 400; color: #666; }
.pad-tools { display: flex; gap: 5px; margin-left: auto; padding-top: 3px; color: #aaa; }
.blue { color: #b4cbdf; }
.dropzone {
  height: 48px;
  margin: 10px 11px 17px;
  border: 3px dotted #d0d0d0;
  border-radius: 4px;
  color: #b0b0b0;
  font-size: 17px;
  line-height: 40px;
  text-align: center;
}
.palette { display: grid; grid-template-columns: repeat(4, 56px); padding: 7px 6px; }
.palette svg { width: 56px; height: 56px; fill: #fff; stroke: #444; stroke-width: 1.5; }
.palette text { fill: #222; stroke: none; }
.palette .fill { fill: #111; stroke: none; }
.t12 { font-size: 12px; }
.t9 { font-size: 9px; font-weight: 700; }
.palette .t5 { font-size: 5px; font-weight: 700; }
.track { flex: 1; padding: 5px 0 0 3px; }
.thumb { width: 6px; height: 425px; background: #c4c4c4; border-radius: 2px; }
.more-shapes {
  justify-content: flex-start;
  height: 48px;
  flex: none;
  padding: 0 17px 4px;
  background: #ececec;
  border-top: 1px solid #e2e2e2;
  color: #666;
}
.splitter { display: flex; align-items: center; justify-content: flex-end; width: 16px; flex: none; padding-right: 7px; background: #e3e3e3; }
.splitter::before { content: ""; width: 2px; height: 9px; background: #888; }

.center { display: flex; flex-direction: column; flex: 1; min-width: 0; }
.canvas-row { display: flex; flex: 1; min-height: 0; }
.canvas { position: relative; flex: 1; overflow: hidden; background: #e9e9e9; }
.sheet { width: 1074px; height: 100%; background: #fff; }
.page-edge { position: absolute; left: 855px; top: 0; bottom: 0; width: 1px; background: #000; }
.outline { position: absolute; left: 374px; top: 0; }
.glyph { position: absolute; left: 378px; top: -100px; color: #000; font-size: 859px; line-height: 859px; }
.vtrack { width: 14px; flex: none; background: #ededed; padding: 211px 4px 0; }
.vthumb { height: 104px; background: #c6c6c6; border-radius: 3px; }
.htrack { height: 16px; flex: none; padding: 5px 0 0 427px; background: #f1f1f1; border-right: 14px solid #fff; }
.hthumb { width: 426px; height: 7px; background: #c6c6c6; border-radius: 3px; }
.pages { display: flex; height: 36px; flex: none; background: #dadada; }
.page-btn { width: 37px; border: 1px solid #c4c4c4; border-bottom: 0; color: #777; }
.page-name { width: 174px; justify-content: flex-start; padding: 0 4px 4px; background: #ececec; font-weight: 700; }

/* format panel */
.format { width: 304px; flex: none; background: #f5f5f5; color: #777; }
.format-title { height: 44px; border-bottom: 1px solid #c9c9c9; line-height: 38px; text-align: center; }
.block { border-bottom: 2px solid #d2d2d2; padding: 0 25px 0 20px; }
.block h3, .block label { padding-left: 3px; font-weight: 700; line-height: 18px; }
.font-block { height: 252px; padding-top: 16px; }
.font-block h3 { margin-bottom: 10px; }
.pick { display: flex; align-items: center; position: relative; height: 30px; margin-bottom: 4px; }
.pick select { width: 100%; height: 100%; padding: 0 6px 5px; appearance: none; background: #fff; border: 2px solid #b5b5b5; border-radius: 3px; outline: 0; }
.pick svg { position: absolute; right: 13px; top: 11px; pointer-events: none; }
.pick::after { content: ""; position: absolute; right: 32px; top: 0; bottom: 0; width: 1px; background: #bbb; }
.btn-row { display: flex; align-items: center; gap: 3px; height: 36px; margin-bottom: 8px; }
.pick + .btn-row { margin-top: 6px; }
.tb { width: 39px; height: 36px; background: linear-gradient(#f7f7f7, #e0e0e0); border: 2px solid #b8b8b8; border-radius: 4px; color: #222; }
.tb.on { background: linear-gradient(#a8e9fc, #6fd5f5); }
.pair { display: flex; gap: 4px; width: 82px; margin-left: auto; }
.spin { display: flex; align-items: center; width: 79px; margin-left: auto; }
.spin input { flex: 1; min-width: 0; height: 29px; padding: 0 1px 2px; background: #fff; border: 1px solid #aaa; border-right-width: 2px; outline: 0; color: #333; font-size: 17px; text-align: right; }
.spin.short { width: 76px; align-items: flex-start; }
.steps { display: flex; flex-direction: column; width: 16px; }
.steps button { height: 14px; border: 1px solid #c5c5c5; border-radius: 3px; }
.short .steps button { height: 12px; }
.line { display: flex; align-items: center; justify-content: space-between; }
.colors { height: 79px; padding-top: 9px; }
.colors h3 { padding-bottom: 6px; }
.swatch { width: 58px; height: 28px; margin-bottom: 4px; padding: 3px; border: 2px solid #aaa; border-radius: 5px; background: #ececec; }
.swatch i { width: 100%; height: 100%; border: 2px solid #000; background: #fff; }
.swatch.black i { background: #000; }
.height-block { height: 43px; padding-top: 8px; }
.height-block label { padding-bottom: 7px; }
.insert-block { height: 96px; padding-top: 12px; }
.insert-block .btn-row { margin: 11px 0 0 1px; }

/* promo footer */
.footer { display: flex; height: 59px; flex: none; background: #e4e4e4; border-top: 2px solid #c6c6c6; color: #2b5797; font-size: 18px; font-weight: 700; }
.foot-cell { display: flex; align-items: center; border-right: 1px solid #c9c9c9; padding-bottom: 4px; }
.blank { width: 461px; }
.rate { width: 359px; justify-content: center; gap: 8px; padding-right: 3px; }
.stars { display: flex; color: #c4c4c4; margin-top: -8px; }
.desktop-app { width: 333px; gap: 13px; padding-left: 30px; }
.badge { background: #f0731a; }
.social { display: flex; align-items: center; gap: 14px; margin-left: auto; padding: 0 14px 2px 0; }
.foot-close { color: #b3c0d2; }
```
